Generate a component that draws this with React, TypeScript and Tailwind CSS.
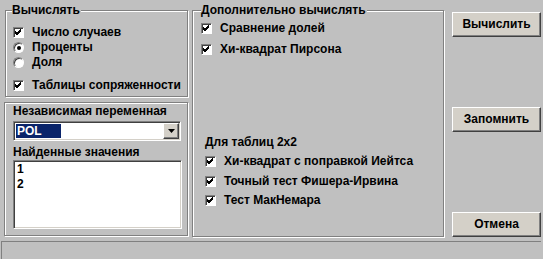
import React from "react";

function Check() {
  return (
    <svg width="7" height="7" viewBox="0 0 7 7" className="block">
      <path d="M0 2 L2 4 L6 0 M0 3 L2 5 L6 1 M0 4 L2 6 L6 2" stroke="#000" strokeWidth="1" fill="none" shapeRendering="crispEdges" />
    </svg>
  );
}

function CheckBox({ label, gap = "gap-[8px]" }: { label: string; gap?: string }) {
  return (
    <div className={`flex items-center h-[15px] ${gap}`}>
      <div className="w-[11px] h-[11px] shrink-0 bg-white border border-t-[#808080] border-l-[#808080] border-r-white border-b-white shadow-[inset_1px_1px_0_#404040] flex items-center justify-center">
        <Check />
      </div>
      <span className="whitespace-nowrap">{label}</span>
    </div>
  );
}

function Radio({ label, checked }: { label: string; checked?: boolean }) {
  return (
    <div className="flex items-center h-[15px] gap-[8px]">
      <div className="w-[11px] h-[11px] shrink-0 rounded-full bg-white border border-t-[#808080] border-l-[#808080] border-r-white border-b-white shadow-[inset_1px_1px_0_#404040] flex items-center justify-center">
        {checked && <div className="w-[4px] h-[4px] rounded-full bg-black" />}
      </div>
      <span className="whitespace-nowrap">{label}</span>
    </div>
  );
}

function Button({ label, className = "" }: { label: string; className?: string }) {
  return (
    <div
      className={`w-[89px] h-[25px] flex items-center justify-center bg-[#d4d0c8] border border-t-white border-l-white border-r-[#404040] border-b-[#404040] shadow-[inset_-1px_-1px_0_#808080] ${className}`}
    >
      {label}
    </div>
  );
}

const etched = "border border-[#808080] shadow-[1px_1px_0_#fff,inset_1px_1px_0_#fff]";
const sunken =
  "bg-white border border-t-[#808080] border-l-[#808080] border-r-white border-b-white shadow-[inset_1px_1px_0_#404040,inset_-1px_-1px_0_#d4d0c8]";

export default function App() {
  return (
    <div
      className="w-[543px] h-[259px] bg-[#c0c0c0] text-black text-[12px] font-bold leading-[15px] flex flex-col overflow-hidden"
      style={{ fontFamily: '"Liberation Sans", Arial, sans-serif' }}
    >
      <div className="flex h-[241px]">
        {/* left column */}
        <div className="flex flex-col pl-[4px] pt-[10px]">
          <div className={`relative ml-[1px] w-[183px] h-[87px] ${etched} pt-[14px] pl-[7px]`}>
            <span className="absolute -top-[8px] left-[6px] bg-[#c0c0c0] pr-[1px]">Вычислять</span>
            <CheckBox label="Число случаев" />
            <Radio label="Проценты" checked />
            <Radio label="Доля" />
            <div className="mt-[8px]">
              <CheckBox label="Таблицы сопряженности" />
            </div>
          </div>
          <div className={`mt-[5px] w-[184px] h-[134px] ${etched} pt-[1px] pl-[8px]`}>
            <div>Независимая переменная</div>
            <div className={`mt-[2px] w-[168px] h-[20px] ${sunken} flex items-center justify-between px-[1px]`}>
              <div className="ml-[1px] w-[45px] h-[14px] bg-[#0a246a] text-white pl-[1px] leading-[14px]">POL</div>
              <div className="w-[16px] h-[16px] bg-[#d4d0c8] border border-t-white border-l-white border-r-[#404040] border-b-[#404040] shadow-[inset_-1px_-1px_0_#808080] flex items-center justify-center">
                <svg width="7" height="4" viewBox="0 0 7 4" className="block">
                  <path d="M0 0 H7 L3.5 4 Z" fill="#000" />
                </svg>
              </div>
            </div>
            <div className="mt-[4px]">Найденные значения</div>
            <div className={`w-[169px] h-[69px] ${sunken} pt-[1px] pl-[3px]`}>
              <div>1</div>
              <div>2</div>
            </div>
          </div>
        </div>

        {/* middle group */}
        <div className="pt-[10px] ml-[4px]">
          <div className={`relative w-[252px] h-[227px] ${etched} pt-[10px] pl-[8px] flex flex-col`}>
            <span className="absolute -top-[8px] left-[8px] bg-[#c0c0c0] pr-[1px]">Дополнительно вычислять</span>
            <CheckBox label="Сравнение долей" />
            <div className="mt-[6px]">
              <CheckBox label="Хи-квадрат Пирсона" />
            </div>
            <div className="pl-[4px] mt-[78px]">
              <div>Для таблиц 2х2</div>
              <div className="mt-[4px]">
                <CheckBox label="Хи-квадрат с поправкой Иейтса" />
              </div>
              <div className="mt-[5px]">
                <CheckBox label="Точный тест Фишера-Ирвина" />
              </div>
              <div className="mt-[4px]">
                <CheckBox label="Тест МакНемара" />
              </div>
            </div>
          </div>
        </div>

        {/* buttons */}
        <div className="ml-[8px] pt-[12px] flex flex-col">
          <Button label="Вычислить" />
          <Button label="Запомнить" className="mt-[70px]" />
          <Button label="Отмена" className="mt-[80px]" />
        </div>
      </div>

      {/* status bar */}
      <div className="ml-[1px] w-[540px] h-[18px] border-t border-l border-[#808080] bg-[#c0c0c0]" />
    </div>
  );
}
